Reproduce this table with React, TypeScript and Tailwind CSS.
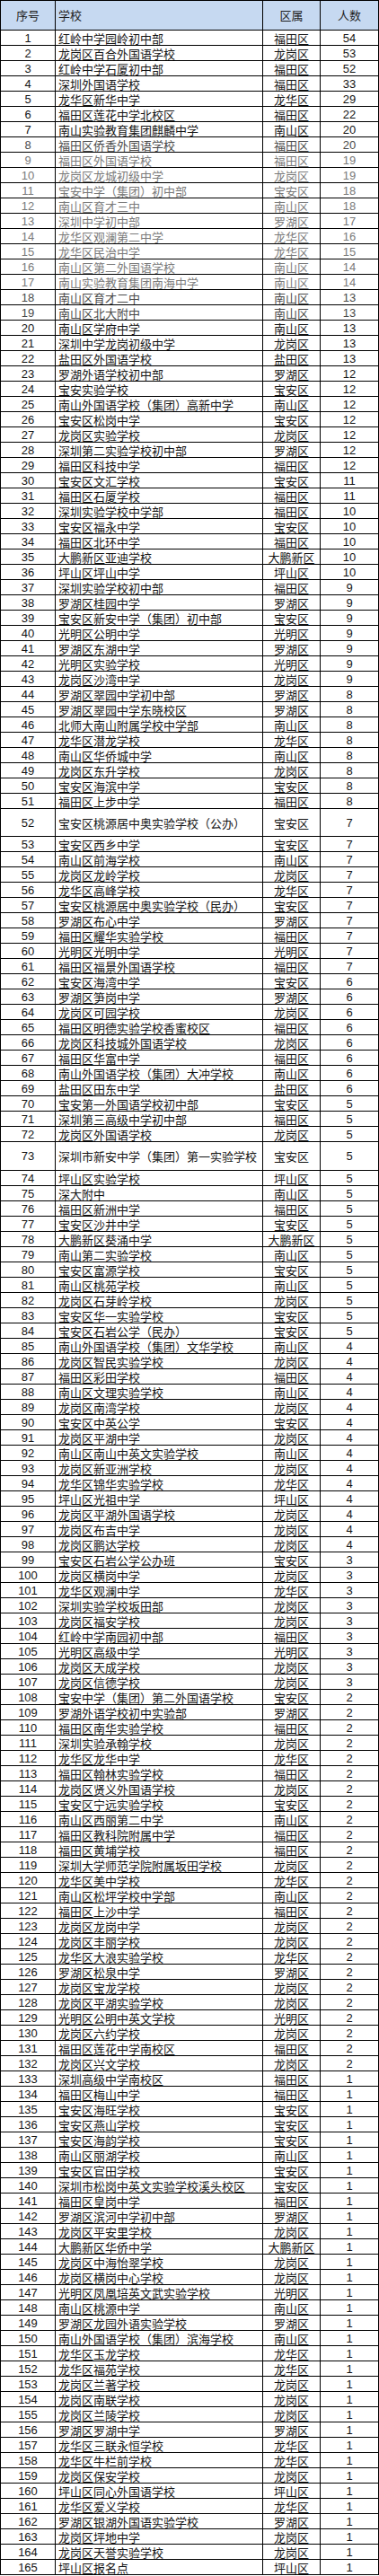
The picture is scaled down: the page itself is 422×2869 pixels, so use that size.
const raw = `红岭中学园岭初中部|福田区|54
龙岗区百合外国语学校|龙岗区|53
红岭中学石厦初中部|福田区|52
深圳外国语学校|福田区|33
龙华区新华中学|龙华区|29
福田区莲花中学北校区|福田区|22
南山实验教育集团麒麟中学|南山区|20
福田区侨香外国语学校|福田区|20
福田区外国语学校|福田区|19
龙岗区龙城初级中学|龙岗区|19
宝安中学（集团）初中部|宝安区|18
南山区育才三中|南山区|18
深圳中学初中部|罗湖区|17
龙华区观澜第二中学|龙华区|16
龙华区民治中学|龙华区|15
南山区第二外国语学校|南山区|14
南山实验教育集团南海中学|南山区|14
南山区育才二中|南山区|13
南山区北大附中|南山区|13
南山区学府中学|南山区|13
深圳中学龙岗初级中学|龙岗区|13
盐田区外国语学校|盐田区|13
罗湖外语学校初中部|罗湖区|12
宝安实验学校|宝安区|12
南山外国语学校（集团）高新中学|南山区|12
宝安区松岗中学|宝安区|12
龙岗区实验学校|龙岗区|12
深圳第二实验学校初中部|罗湖区|12
福田区科技中学|福田区|12
宝安区文汇学校|宝安区|11
福田区石厦学校|福田区|11
深圳实验学校中学部|福田区|10
宝安区福永中学|宝安区|10
福田区北环中学|福田区|10
大鹏新区亚迪学校|大鹏新区|10
坪山区坪山中学|坪山区|10
深圳实验学校初中部|福田区|9
罗湖区桂园中学|罗湖区|9
宝安区新安中学（集团）初中部|宝安区|9
光明区公明中学|光明区|9
罗湖区东湖中学|罗湖区|9
光明区实验学校|光明区|9
龙岗区沙湾中学|龙岗区|9
罗湖区翠园中学初中部|罗湖区|8
罗湖区翠园中学东晓校区|罗湖区|8
北师大南山附属学校中学部|南山区|8
龙华区潜龙学校|龙华区|8
南山区华侨城中学|南山区|8
龙岗区东升学校|龙岗区|8
宝安区海滨中学|宝安区|8
福田区上步中学|福田区|8
宝安区桃源居中奥实验学校（公办）|宝安区|7
宝安区西乡中学|宝安区|7
南山区前海学校|南山区|7
龙岗区龙岭学校|龙岗区|7
龙华区高峰学校|龙华区|7
宝安区桃源居中奥实验学校（民办）|宝安区|7
罗湖区布心中学|罗湖区|7
福田区耀华实验学校|福田区|7
光明区光明中学|光明区|7
福田区福景外国语学校|福田区|7
宝安区海湾中学|宝安区|6
罗湖区笋岗中学|罗湖区|6
龙岗区可园学校|龙岗区|6
福田区明德实验学校香蜜校区|福田区|6
龙岗区科技城外国语学校|龙岗区|6
福田区华富中学|福田区|6
南山外国语学校（集团）大冲学校|南山区|6
盐田区田东中学|盐田区|6
宝安第一外国语学校初中部|宝安区|5
深圳第三高级中学初中部|福田区|5
龙岗区外国语学校|龙岗区|5
深圳市新安中学（集团）第一实验学校|宝安区|5
坪山区实验学校|坪山区|5
深大附中|南山区|5
福田区新洲中学|福田区|5
宝安区沙井中学|宝安区|5
大鹏新区葵涌中学|大鹏新区|5
南山第二实验学校|南山区|5
宝安区富源学校|宝安区|5
南山区桃苑学校|南山区|5
龙岗区石芽岭学校|龙岗区|5
宝安区华一实验学校|宝安区|5
宝安区石岩公学（民办）|宝安区|5
南山外国语学校（集团）文华学校|南山区|4
龙岗区智民实验学校|龙岗区|4
福田区彩田学校|福田区|4
南山区文理实验学校|南山区|4
龙岗区南湾学校|龙岗区|4
宝安区中英公学|宝安区|4
龙岗区平湖中学|龙岗区|4
南山区南山中英文实验学校|南山区|4
龙岗区新亚洲学校|龙岗区|4
龙华区锦华实验学校|龙华区|4
坪山区光祖中学|坪山区|4
龙岗区平湖外国语学校|龙岗区|4
龙岗区布吉中学|龙岗区|4
龙岗区鹏达学校|龙岗区|4
宝安区石岩公学公办班|宝安区|3
龙岗区横岗中学|龙岗区|3
龙华区观澜中学|龙华区|3
深圳实验学校坂田部|龙岗区|3
龙岗区福安学校|龙岗区|3
红岭中学南园初中部|福田区|3
光明区高级中学|光明区|3
龙岗区天成学校|龙岗区|3
龙岗区信德学校|龙岗区|3
宝安中学（集团）第二外国语学校|宝安区|2
罗湖外语学校初中实验部|罗湖区|2
福田区南华实验学校|福田区|2
深圳实验承翰学校|龙岗区|2
龙华区龙华中学|龙华区|2
福田区翰林实验学校|福田区|2
龙岗区贤义外国语学校|龙岗区|2
宝安区宁远实验学校|宝安区|2
南山区西丽第二中学|南山区|2
福田区教科院附属中学|福田区|2
福田区黄埔学校|福田区|2
深圳大学师范学院附属坂田学校|龙岗区|2
龙华区美中学校|龙华区|2
南山区松坪学校中学部|南山区|2
福田区上沙中学|福田区|2
龙岗区龙岗中学|龙岗区|2
龙岗区丰丽学校|龙岗区|2
龙华区大浪实验学校|龙华区|2
罗湖区松泉中学|罗湖区|2
龙岗区宝龙学校|龙岗区|2
龙岗区平湖实验学校|龙岗区|2
光明区公明中英文学校|光明区|2
龙岗区六约学校|龙岗区|2
福田区莲花中学南校区|福田区|2
龙岗区兴文学校|龙岗区|2
深圳高级中学南校区|福田区|1
福田区梅山中学|福田区|1
宝安区海旺学校|宝安区|1
宝安区燕山学校|宝安区|1
宝安区海韵学校|宝安区|1
南山区丽湖学校|南山区|1
宝安区官田学校|宝安区|1
深圳市松岗中英文实验学校溪头校区|宝安区|1
福田区皇岗中学|福田区|1
罗湖区滨河中学初中部|罗湖区|1
龙岗区平安里学校|龙岗区|1
大鹏新区华侨中学|大鹏新区|1
龙岗区中海怡翠学校|龙岗区|1
龙岗区横岗中心学校|龙岗区|1
光明区凤凰培英文武实验学校|光明区|1
南山区桃源中学|南山区|1
罗湖区龙园外语实验学校|罗湖区|1
南山外国语学校（集团）滨海学校|南山区|1
龙华区玉龙学校|龙华区|1
龙华区福苑学校|龙华区|1
龙岗区兰著学校|龙岗区|1
龙岗区南联学校|龙岗区|1
龙岗区兰陵学校|龙岗区|1
罗湖区罗湖中学|罗湖区|1
龙华区三联永恒学校|龙华区|1
龙华区牛栏前学校|龙华区|1
龙岗区保安学校|龙岗区|1
坪山区同心外国语学校|坪山区|1
龙华区爱义学校|龙华区|1
罗湖区银湖外国语实验学校|罗湖区|1
龙岗区坪地中学|龙岗区|1
龙岗区天誉实验学校|龙岗区|1
坪山区报名点|坪山区|1`;

const rows = raw.split("\n").map((line, i) => {
  const [school, district, count] = line.split("|");
  return { no: i + 1, school, district, count };
});

// the source image has a faded band around rows 8-19
const tone = (no: number) => {
  if (no >= 9 && no <= 17) return "text-[#7a7a7a]";
  if (no === 8 || no === 18 || no === 19) return "text-[#4a4a4a]";
  return "text-[#141414]";
};

const height = (no: number) => {
  if (no === 52) return "h-[31px]";
  if (no === 73) return "h-[32px]";
  return "h-[17px]";
};

const cjk = { fontFamily: '"Noto Sans CJK SC", "Noto Sans", sans-serif' };
const num = { fontFamily: '"Liberation Sans", Arial, sans-serif' };

const App = () => {
  return (
    <div className="w-[422px] bg-white">
      <div className="flex flex-col border-l border-t border-black">
        <div className="flex h-[33px] border-b border-black bg-[#c6d9f1] text-[13px] text-[#1f1f1f]" style={cjk}>
          <div className="flex w-[61px] items-center justify-center border-r border-black">序号</div>
          <div className="flex w-[231px] items-center border-r border-black pl-[3px]">学校</div>
          <div className="flex w-[64px] items-center justify-center border-r border-black">区属</div>
          <div className="flex flex-1 items-center justify-center border-r border-black">人数</div>
        </div>

        {rows.map((r) => (
          <div
            key={r.no}
            className={`flex border-b border-black leading-none ${height(r.no)} ${tone(r.no)}`}
          >
            <div className="flex w-[61px] items-center justify-center border-r border-black text-[13px]" style={num}>
              {r.no}
            </div>
            <div className="flex w-[231px] items-center overflow-hidden whitespace-nowrap border-r border-black pl-[3px] text-[13px]" style={cjk}>
              {r.school}
            </div>
            <div className="flex w-[64px] items-center justify-center whitespace-nowrap border-r border-black text-[13px]" style={cjk}>
              {r.district}
            </div>
            <div className="flex flex-1 items-center justify-center border-r border-black text-[13px]" style={num}>
              {r.count}
            </div>
          </div>
        ))}
      </div>
    </div>
  );
};

export default App;
